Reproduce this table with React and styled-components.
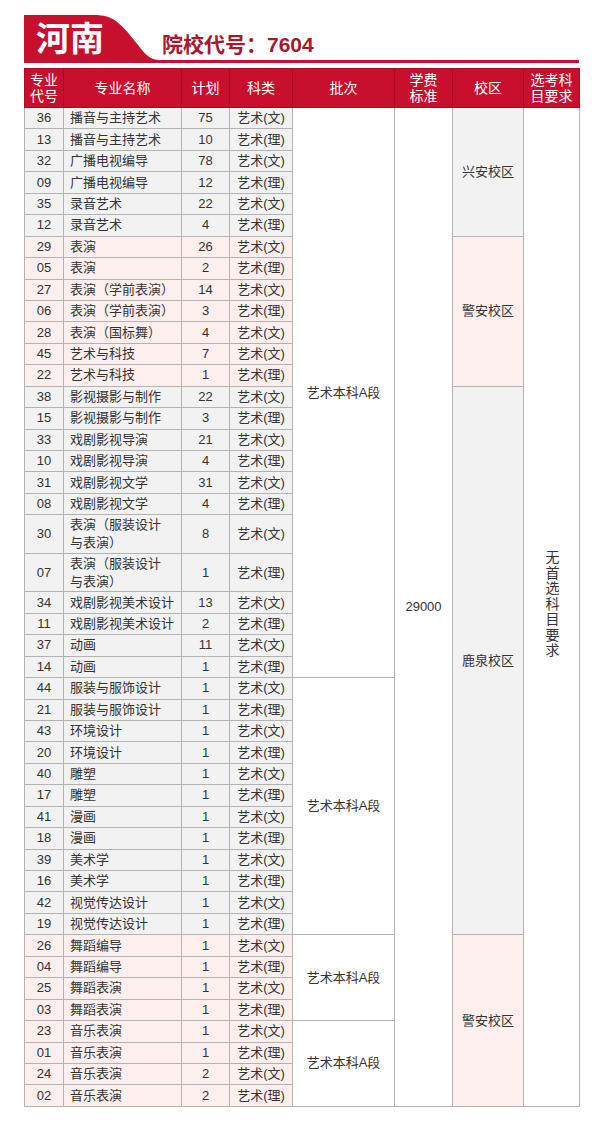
import React from 'react';
import styled, { createGlobalStyle } from 'styled-components';

const RED = '#c8102e';

const GlobalStyle = createGlobalStyle`
  body {
    margin: 0;
    background: #fff;
    font-family: "Liberation Sans", "Noto Sans CJK SC", sans-serif;
  }
`;

const Page = styled.div`
  width: 555px;
  padding: 15px 21px 20px 24px;
`;

const TitleBar = styled.div`
  display: flex;
  align-items: flex-end;
  height: 45px;
  border-bottom: 3px solid ${RED};
  margin-bottom: 5px;
`;

const Tab = styled.div`
  width: 136px;
  height: 45px;
  box-sizing: border-box;
  padding: 4px 0 0 12px;
  background: ${RED};
  clip-path: path('M0 0 H70 C80 0 86 2 92 6 C100 12 106 20 114 30 C121 39 126 45 136 45 H0 Z');
  color: #fff;
  font-size: 34px;
  font-weight: bold;
  line-height: 40px;
`;

const SchoolCode = styled.div`
  margin-left: 2px;
  padding-bottom: 3px;
  color: #a6192e;
  font-size: 21px;
  font-weight: bold;
  line-height: 24px;
`;

const Table = styled.table`
  width: 555px;
  border-collapse: collapse;
  table-layout: fixed;
  border: 1px solid #c9a3ab;
`;

const Th = styled.th`
  height: 38px;
  padding: 0;
  background: ${RED};
  color: #fff;
  font-size: 14px;
  font-weight: normal;
  line-height: 16px;
  border: 1px solid #a50d26;
`;

const Row = styled.tr`
  height: ${p => (p.$tall ? '38.5px' : '21.45px')};
`;

const Cell = styled.td`
  padding: 0;
  padding-left: ${p => (p.$left ? '6px' : '0')};
  background: ${p => (p.$tone === 'pink' ? '#fcefee' : p.$tone === 'gray' ? '#f2f2f2' : '#fff')};
  color: #333;
  font-size: 13px;
  line-height: 18px;
  text-align: ${p => (p.$left ? 'left' : 'center')};
  vertical-align: middle;
  border: 1px solid #b3b3b3;
`;

const Vertical = styled.div`
  display: inline-block;
  writing-mode: vertical-rl;
  text-orientation: upright;
  font-size: 14px;
  letter-spacing: 1.5px;
  color: #333;
`;

const rows = [
  ['36', '播音与主持艺术', 75, '文'],
  ['13', '播音与主持艺术', 10, '理'],
  ['32', '广播电视编导', 78, '文'],
  ['09', '广播电视编导', 12, '理'],
  ['35', '录音艺术', 22, '文'],
  ['12', '录音艺术', 4, '理'],
  ['29', '表演', 26, '文'],
  ['05', '表演', 2, '理'],
  ['27', '表演（学前表演）', 14, '文'],
  ['06', '表演（学前表演）', 3, '理'],
  ['28', '表演（国标舞）', 4, '文'],
  ['45', '艺术与科技', 7, '文'],
  ['22', '艺术与科技', 1, '理'],
  ['38', '影视摄影与制作', 22, '文'],
  ['15', '影视摄影与制作', 3, '理'],
  ['33', '戏剧影视导演', 21, '文'],
  ['10', '戏剧影视导演', 4, '理'],
  ['31', '戏剧影视文学', 31, '文'],
  ['08', '戏剧影视文学', 4, '理'],
  ['30', ['表演（服装设计', '与表演）'], 8, '文'],
  ['07', ['表演（服装设计', '与表演）'], 1, '理'],
  ['34', '戏剧影视美术设计', 13, '文'],
  ['11', '戏剧影视美术设计', 2, '理'],
  ['37', '动画', 11, '文'],
  ['14', '动画', 1, '理'],
  ['44', '服装与服饰设计', 1, '文'],
  ['21', '服装与服饰设计', 1, '理'],
  ['43', '环境设计', 1, '文'],
  ['20', '环境设计', 1, '理'],
  ['40', '雕塑', 1, '文'],
  ['17', '雕塑', 1, '理'],
  ['41', '漫画', 1, '文'],
  ['18', '漫画', 1, '理'],
  ['39', '美术学', 1, '文'],
  ['16', '美术学', 1, '理'],
  ['42', '视觉传达设计', 1, '文'],
  ['19', '视觉传达设计', 1, '理'],
  ['26', '舞蹈编导', 1, '文'],
  ['04', '舞蹈编导', 1, '理'],
  ['25', '舞蹈表演', 1, '文'],
  ['03', '舞蹈表演', 1, '理'],
  ['23', '音乐表演', 1, '文'],
  ['01', '音乐表演', 1, '理'],
  ['24', '音乐表演', 2, '文'],
  ['02', '音乐表演', 2, '理'],
];

// start index -> rows spanned
const batches = { 0: 25, 25: 12, 37: 4, 41: 4 };
const campuses = {
  0: { span: 6, name: '兴安校区', tone: 'gray' },
  6: { span: 7, name: '警安校区', tone: 'pink' },
  13: { span: 24, name: '鹿泉校区', tone: 'gray' },
  37: { span: 8, name: '警安校区', tone: 'pink' },
};

const toneOf = i => {
  if (i < 6) return 'gray';
  if (i < 13) return 'pink';
  if (i < 37) return 'gray';
  return 'pink';
};

const widths = [39, 118, 48, 63, 102, 58, 71, 56];

const App = () => {
  return (
    <Page>
      <GlobalStyle />
      <TitleBar>
        <Tab>河南</Tab>
        <SchoolCode>院校代号：7604</SchoolCode>
      </TitleBar>
      <Table>
        <colgroup>
          {widths.map((w, i) => (
            <col key={i} style={{ width: w }} />
          ))}
        </colgroup>
        <thead>
          <tr>
            <Th>专业<br />代号</Th>
            <Th>专业名称</Th>
            <Th>计划</Th>
            <Th>科类</Th>
            <Th>批次</Th>
            <Th>学费<br />标准</Th>
            <Th>校区</Th>
            <Th>选考科<br />目要求</Th>
          </tr>
        </thead>
        <tbody>
          {rows.map(([code, name, plan, kind], i) => {
            const tone = toneOf(i);
            const tall = Array.isArray(name);
            const campus = campuses[i];
            return (
              <Row key={code} $tall={tall}>
                <Cell $tone={tone}>{code}</Cell>
                <Cell $tone={tone} $left>
                  {tall ? (
                    <>
                      {name[0]}
                      <br />
                      {name[1]}
                    </>
                  ) : (
                    name
                  )}
                </Cell>
                <Cell $tone={tone}>{plan}</Cell>
                <Cell $tone={tone}>艺术({kind})</Cell>
                {batches[i] && <Cell rowSpan={batches[i]}>艺术本科A段</Cell>}
                {i === 0 && <Cell rowSpan={rows.length}>29000</Cell>}
                {campus && (
                  <Cell rowSpan={campus.span} $tone={campus.tone}>
                    {campus.name}
                  </Cell>
                )}
                {i === 0 && (
                  <Cell rowSpan={rows.length}>
                    <Vertical>无首选科目要求</Vertical>
                  </Cell>
                )}
              </Row>
            );
          })}
        </tbody>
      </Table>
    </Page>
  );
};

export default App;
